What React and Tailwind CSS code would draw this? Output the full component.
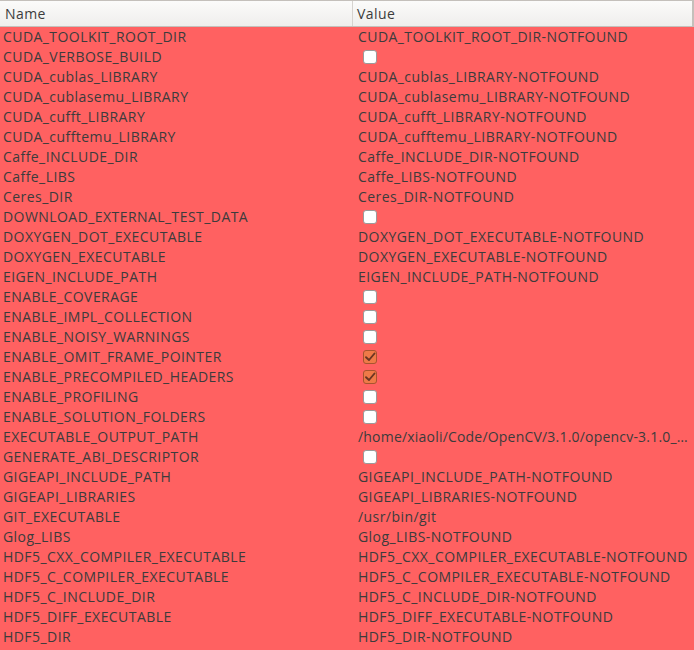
import React from "react";

const rows = [
  ["CUDA_TOOLKIT_ROOT_DIR", "CUDA_TOOLKIT_ROOT_DIR-NOTFOUND"],
  ["CUDA_VERBOSE_BUILD", false],
  ["CUDA_cublas_LIBRARY", "CUDA_cublas_LIBRARY-NOTFOUND"],
  ["CUDA_cublasemu_LIBRARY", "CUDA_cublasemu_LIBRARY-NOTFOUND"],
  ["CUDA_cufft_LIBRARY", "CUDA_cufft_LIBRARY-NOTFOUND"],
  ["CUDA_cufftemu_LIBRARY", "CUDA_cufftemu_LIBRARY-NOTFOUND"],
  ["Caffe_INCLUDE_DIR", "Caffe_INCLUDE_DIR-NOTFOUND"],
  ["Caffe_LIBS", "Caffe_LIBS-NOTFOUND"],
  ["Ceres_DIR", "Ceres_DIR-NOTFOUND"],
  ["DOWNLOAD_EXTERNAL_TEST_DATA", false],
  ["DOXYGEN_DOT_EXECUTABLE", "DOXYGEN_DOT_EXECUTABLE-NOTFOUND"],
  ["DOXYGEN_EXECUTABLE", "DOXYGEN_EXECUTABLE-NOTFOUND"],
  ["EIGEN_INCLUDE_PATH", "EIGEN_INCLUDE_PATH-NOTFOUND"],
  ["ENABLE_COVERAGE", false],
  ["ENABLE_IMPL_COLLECTION", false],
  ["ENABLE_NOISY_WARNINGS", false],
  ["ENABLE_OMIT_FRAME_POINTER", true],
  ["ENABLE_PRECOMPILED_HEADERS", true],
  ["ENABLE_PROFILING", false],
  ["ENABLE_SOLUTION_FOLDERS", false],
  ["EXECUTABLE_OUTPUT_PATH", "/home/xiaoli/Code/OpenCV/3.1.0/opencv-3.1.0_…", true],
  ["GENERATE_ABI_DESCRIPTOR", false],
  ["GIGEAPI_INCLUDE_PATH", "GIGEAPI_INCLUDE_PATH-NOTFOUND"],
  ["GIGEAPI_LIBRARIES", "GIGEAPI_LIBRARIES-NOTFOUND"],
  ["GIT_EXECUTABLE", "/usr/bin/git"],
  ["Glog_LIBS", "Glog_LIBS-NOTFOUND"],
  ["HDF5_CXX_COMPILER_EXECUTABLE", "HDF5_CXX_COMPILER_EXECUTABLE-NOTFOUND"],
  ["HDF5_C_COMPILER_EXECUTABLE", "HDF5_C_COMPILER_EXECUTABLE-NOTFOUND"],
  ["HDF5_C_INCLUDE_DIR", "HDF5_C_INCLUDE_DIR-NOTFOUND"],
  ["HDF5_DIFF_EXECUTABLE", "HDF5_DIFF_EXECUTABLE-NOTFOUND"],
  ["HDF5_DIR", "HDF5_DIR-NOTFOUND"],
];

function CheckBox({ checked }) {
  if (checked) {
    return (
      <div className="w-[14px] h-[14px] rounded-[3px] border border-[#a8542e] bg-[#ef7a48] flex items-center justify-center">
        <svg width="12" height="12" viewBox="0 0 12 12">
          <path d="M2 6.2 L5 9 L10.5 2.5" fill="none" stroke="#6b3524" strokeWidth="1.9" strokeLinecap="round" strokeLinejoin="round" />
        </svg>
      </div>
    );
  }
  return <div className="w-[14px] h-[14px] rounded-[3px] border border-[#9a9a9a] bg-white" />;
}

export default function App() {
  return (
    <div
      className="w-[694px] h-[650px] overflow-hidden bg-[#ff6161] text-[#3c3c3c] text-[14px] leading-[20px] tracking-[0.44px]"
      style={{ fontFamily: '"Open Sans", "Noto Sans", sans-serif' }}
    >
      <div className="flex h-[27px] border-t border-b border-[#c4c0bb] bg-gradient-to-b from-[#fbfbfa] to-[#efeeec] border-r-2 border-r-[#c4c0bb]">
        <div className="w-[353px] border-r border-[#d6d3cf] pl-[5px] flex items-center">Name</div>
        <div className="flex-1 pl-[4px] flex items-center">Value</div>
      </div>
      <div className="flex flex-col">
        {rows.map(([name, val, tight], i) => (
          <div key={i} className="flex h-[20px] items-center">
            <div className="w-[353px] pl-[3px] whitespace-nowrap overflow-hidden">{name}</div>
            <div className="w-[341px] pl-[5px] whitespace-nowrap">
              {typeof val === "boolean" ? (
                <div className="pl-[5px]">
                  <CheckBox checked={val} />
                </div>
              ) : (
                <div className={tight ? "tracking-[0.2px]" : ""}>{val}</div>
              )}
            </div>
          </div>
        ))}
      </div>
    </div>
  );
}
